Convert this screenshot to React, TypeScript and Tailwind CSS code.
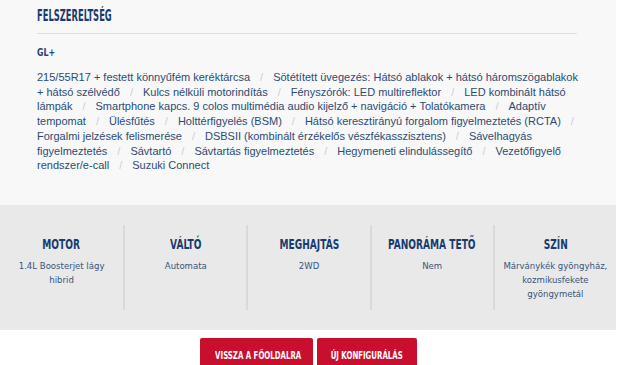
import React from 'react';

// explicit lines so the wrap matches the reference
const lines: string[][] = [
  ['215/55R17 + festett könnyűfém keréktárcsa', 'Sötétített üvegezés: Hátsó ablakok + hátsó háromszögablakok'],
  ['+ hátsó szélvédő', 'Kulcs nélküli motorindítás', 'Fényszórók: LED multireflektor', 'LED kombinált hátsó'],
  ['lámpák', 'Smartphone kapcs. 9 colos multimédia audio kijelző + navigáció + Tolatókamera', 'Adaptív'],
  ['tempomat', 'Ülésfűtés', 'Holttérfigyelés (BSM)', 'Hátsó keresztirányú forgalom figyelmeztetés (RCTA)', ''],
  ['Forgalmi jelzések felismerése', 'DSBSII (kombinált érzékelős vészfékasszisztens)', 'Sávelhagyás'],
  ['figyelmeztetés', 'Sávtartó', 'Sávtartás figyelmeztetés', 'Hegymeneti elindulássegítő', 'Vezetőfigyelő'],
  ['rendszer/e-call', 'Suzuki Connect'],
];

const specs = [
  { title: 'MOTOR', value: ['1.4L Boosterjet lágy', 'hibrid'] },
  { title: 'VÁLTÓ', value: ['Automata'] },
  { title: 'MEGHAJTÁS', value: ['2WD'] },
  { title: 'PANORÁMA TETŐ', value: ['Nem'] },
  { title: 'SZÍN', value: ['Márványkék gyöngyház,', 'kozmikusfekete', 'gyöngymetál'] },
];

const head = "font-['DejaVu_Sans_Condensed','DejaVu_Sans',sans-serif] font-bold whitespace-nowrap inline-block";

function Sep() {
  return <span className="text-[#c9ced6] mx-[10px]">/</span>;
}

export default function App() {
  return (
    <div className="w-[640px] h-[365px] overflow-hidden bg-white font-['Liberation_Sans',Arial,sans-serif]">
      <div className="w-[616px]">
        {/* Equipment */}
        <section className="bg-[#f8f8f8] h-[205px] px-[37px] pt-[4px]">
          <h2 className={`${head} origin-left scale-x-[0.58] text-[16px] text-[#183b6e] leading-[20px]`}>
            FELSZERELTSÉG
          </h2>
          <div className="mt-[5px] border-t border-[#dedede] w-[540px]" />
          <div>
            <h3 className={`${head} origin-left scale-x-[0.8] mt-[12px] text-[11px] text-[#274670] leading-[14px]`}>GL+</h3>
          </div>
          <div className="mt-[7px] text-[11px] leading-[14.7px] text-[#2c4b74]">
            {lines.map((line, li) => (
              <div key={li} className="whitespace-nowrap">
                {line.map((item, i) => (
                  <React.Fragment key={i}>
                    {i > 0 && <Sep />}
                    {item}
                  </React.Fragment>
                ))}
              </div>
            ))}
          </div>
        </section>

        {/* Specs */}
        <section className="bg-[#e9e9ea] h-[125px] grid grid-cols-5 py-[20px]">
          {specs.map((s, i) => (
            <div
              key={s.title}
              className={`flex flex-col items-center pt-[10px] ${i > 0 ? 'border-l-2 border-[#d9d9da]' : ''}`}
            >
              <div className={`${head} scale-x-[0.72] text-[14px] text-[#183b6e] leading-[18px]`}>{s.title}</div>
              <div className="mt-[6px] text-center text-[9.5px] leading-[14px] text-[#3a5478] font-['DejaVu_Sans_Condensed','DejaVu_Sans',sans-serif]">
                {s.value.map((v) => (
                  <div key={v}>{v}</div>
                ))}
              </div>
            </div>
          ))}
        </section>

        {/* Buttons */}
        <div className="flex justify-center gap-[4px] pt-[8px]">
          <button className="w-[113px] h-[32px] rounded-t-[2px] bg-[#c8102e] text-white">
            <span className={`${head} scale-x-[0.74] text-[10.5px]`}>VISSZA A FŐOLDALRA</span>
          </button>
          <button className="w-[100px] h-[32px] rounded-t-[2px] bg-[#c8102e] text-white">
            <span className={`${head} scale-x-[0.74] text-[10.5px]`}>ÚJ KONFIGURÁLÁS</span>
          </button>
        </div>
      </div>
    </div>
  );
}
